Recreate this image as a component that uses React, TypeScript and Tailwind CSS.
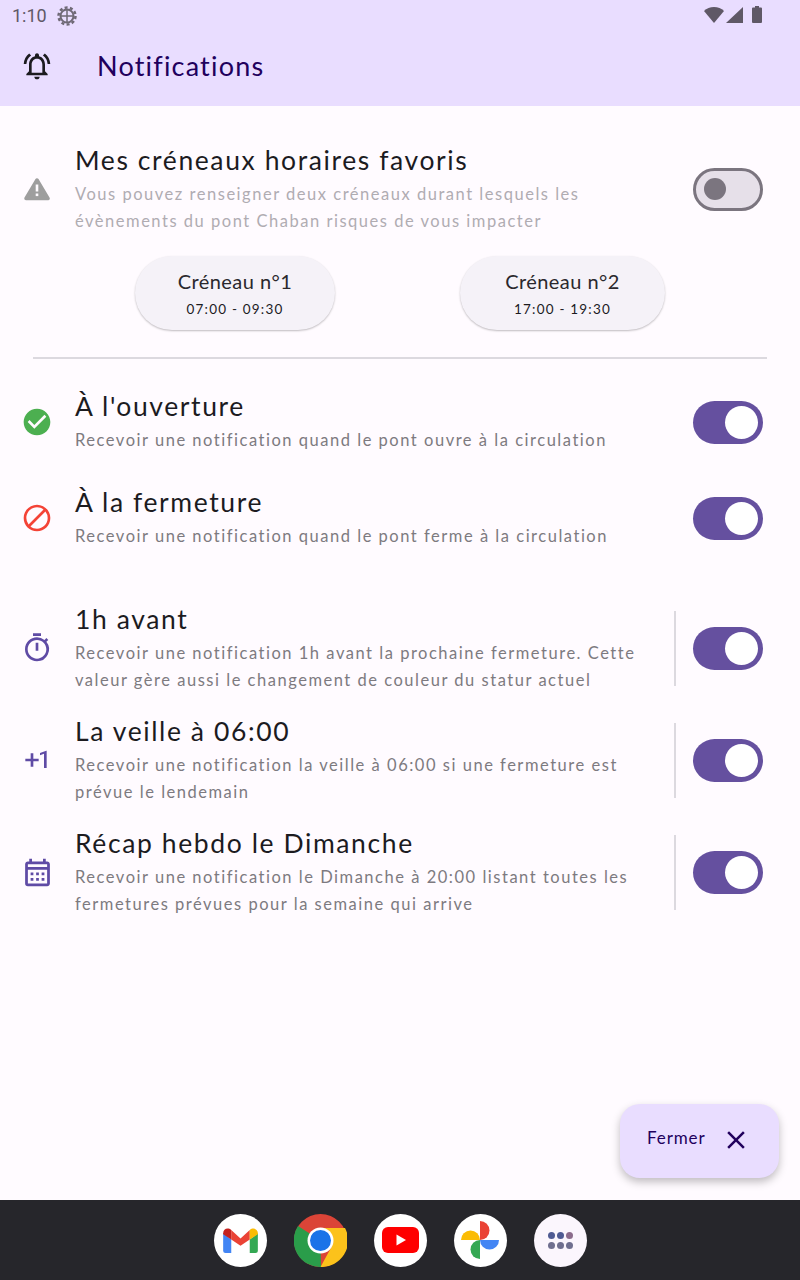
import React from 'react';
import {
  MdCheckCircle,
  MdBlock,
  MdOutlineTimer,
  MdExposurePlus1,
  MdOutlineCalendarMonth,
  MdClose,
  MdOutlineNotificationsActive,
} from 'react-icons/md';

const font = { fontFamily: 'Lato, "Open Sans", sans-serif' };

function Toggle({ on }: { on: boolean }) {
  if (on) {
    return (
      <div className="flex h-[43px] w-[70px] shrink-0 items-center justify-end rounded-full bg-[#65509f] pr-[5px]">
        <div className="h-[33px] w-[33px] rounded-full bg-white" />
      </div>
    );
  }
  return (
    <div className="flex h-[43px] w-[70px] shrink-0 items-center rounded-full border-[3px] border-[#7b757f] bg-[#e6e0e9] pl-[8px]">
      <div className="h-[22px] w-[22px] rounded-full bg-[#7b757f]" />
    </div>
  );
}

interface RowProps {
  icon: React.ReactNode;
  title: string;
  lines: string[];
  on: boolean;
  muted?: boolean;
  divider?: boolean;
  height: string;
}

function Row({ icon, title, lines, on, muted, divider, height }: RowProps) {
  return (
    <div className={`flex items-center pr-[37px] ${height}`}>
      <div className="flex w-[74px] shrink-0 justify-center">{icon}</div>
      <div className="ml-px min-w-0 flex-1">
        <div className="h-[32px] text-[26.5px] leading-[32px] tracking-[1.6px] whitespace-nowrap text-[#1c1b1f]">{title}</div>
        <div className={`mt-[5px] text-[16.5px] leading-[27px] tracking-[1.52px] ${muted ? 'text-[#b0acb2]' : 'text-[#7d7a80]'}`}>
          {lines.map((l) => (
            <div key={l} className="whitespace-nowrap">{l}</div>
          ))}
        </div>
      </div>
      {divider && <div className="mr-[17px] h-[75px] w-[2px] bg-[#dcd9df]" />}
      <Toggle on={on} />
    </div>
  );
}

function SlotButton({ label, time, width }: { label: string; time: string; width: string }) {
  return (
    <div className={`flex h-[74px] flex-col items-center rounded-[37px] bg-[#f5f2f8] pt-[13px] shadow-[0_1px_2px_rgba(0,0,0,0.25)] ${width}`}>
      <div className="text-[20px] leading-[25px] tracking-[0.45px] text-[#2a282d]">{label}</div>
      <div className="mt-[5px] text-[13.5px] leading-[20px] tracking-[1.2px] text-[#1c1b1f]">{time}</div>
    </div>
  );
}

function StatusIcons() {
  return (
    <svg width="60" height="20" viewBox="0 0 60 20" fill="#5f5866">
      <path d="M0 5 C5 -0.5 15 -0.5 20 5 L10 17 Z" />
      <path d="M22 17 L39 1 L39 17 Z" />
      <path d="M48 2.500 a1 1 0 0 1 1 -1 h2 v-1.500 h4 v1.500 h2 a1 1 0 0 1 1 1 v13.500 a1 1 0 0 1 -1 1 h-8 a1 1 0 0 1 -1 -1 Z" />
    </svg>
  );
}

function WarningIcon() {
  return (
    <svg width="26" height="24" viewBox="0 0 26 24">
      <path d="M13 3 L24 21.500 H2 Z" fill="#9e9e9e" stroke="#9e9e9e" strokeWidth="3.500" strokeLinejoin="round" />
      <rect x="11.700" y="7.500" width="2.600" height="7" fill="#fffbff" />
      <rect x="11.700" y="16.500" width="2.600" height="2.600" fill="#fffbff" />
    </svg>
  );
}

function Gmail() {
  return (
    <svg width="37" height="27" viewBox="0 0 32 26" preserveAspectRatio="none">
      <path d="M1 6 L1 23 a2 2 0 0 0 2 2 h5 V12 Z" fill="#4285f4" />
      <path d="M31 6 L31 23 a2 2 0 0 1 -2 2 h-5 V12 Z" fill="#34a853" />
      <path d="M8 3 L16 11 L24 3 L24 12 L16 18 L8 12 Z" fill="#ea4335" />
      <path d="M1 6 C1 2 5 0 8 3 V12 L1 7 Z" fill="#c5221f" />
      <path d="M31 6 C31 2 27 0 24 3 V12 L31 7 Z" fill="#fbbc04" />
    </svg>
  );
}

function Chrome() {
  return (
    <svg width="53" height="53" viewBox="0 0 53 53">
      <circle cx="26.500" cy="26.500" r="26.500" fill="#db4437" />
      <path d="M26.500 26.500 L4 12 A26.500 26.500 0 0 0 27 53 Z" fill="#2a9d4a" />
      <path d="M26.500 14 L51 14 A26.500 26.500 0 0 1 26.500 53 L38 32 Z" fill="#fcc21b" />
      <circle cx="26.500" cy="26.500" r="13" fill="#fff" />
      <circle cx="26.500" cy="26.500" r="10.500" fill="#1a73e8" />
    </svg>
  );
}

function Youtube() {
  return (
    <svg width="37" height="26" viewBox="0 0 37 26">
      <rect width="37" height="26" rx="6" fill="#ff0000" />
      <path d="M14.500 7.500 L24 13 L14.500 18.500 Z" fill="#fff" />
    </svg>
  );
}

function Photos() {
  return (
    <svg width="38" height="38" viewBox="0 0 38 38">
      <path d="M0 19 A9.500 9.500 0 0 1 19 19 Z" fill="#fbbc04" />
      <path d="M19 19 V0 A9.500 9.500 0 0 1 19 19 Z" fill="#ea4335" />
      <path d="M19 19 H38 A9.500 9.500 0 0 1 19 19 Z" fill="#4285f4" />
      <path d="M19 19 V38 A9.500 9.500 0 0 1 19 19 Z" fill="#34a853" />
    </svg>
  );
}

function AppsDots() {
  const colors = ['#4f5b93', '#4f5b93', '#8b6c8c', '#6f6f8f', '#6f6f8f', '#6f6f8f'];
  return (
    <div className="grid grid-cols-3 gap-x-[2px] gap-y-[3px]">
      {colors.map((c, i) => (
        <svg key={i} width="7" height="7" viewBox="0 0 7 7">
          <circle cx="3.500" cy="3.500" r="3.500" fill={c} />
        </svg>
      ))}
    </div>
  );
}

export default function App() {
  const purple = 'text-[#5f4ba5]';
  return (
    <div className="relative flex h-[1280px] w-[800px] flex-col overflow-hidden bg-[#fffbff]" style={font}>
      <header className="h-[106px] shrink-0 bg-[#e9ddff]">
        <div className="flex h-[32px] items-center justify-between pr-[36px] pl-[12px]">
          <div className="flex items-center gap-[10px]">
            <span className="text-[18px] leading-[32px] text-[#5f5866]" style={{ fontFamily: 'Roboto, sans-serif' }}>1:10</span>
            <svg width="20" height="20" viewBox="0 0 20 20" fill="none" stroke="#6f6976">
              <circle cx="10" cy="10" r="6.500" strokeWidth="2" />
              <circle cx="10" cy="10" r="8.500" strokeWidth="2.500" strokeDasharray="3 2.340" />
              <path d="M3.500 10 H16.500 M10 4 V16.500" strokeWidth="1.500" />
            </svg>
          </div>
          <StatusIcons />
        </div>
        <div className="flex h-[74px] items-center pb-[6px]">
          <div className="flex w-[74px] justify-center">
            <MdOutlineNotificationsActive className="text-[#1c1b1f]" size={32} />
          </div>
          <h1 className="ml-[23px] text-[27px] tracking-[1.2px] text-[#21005d]">Notifications</h1>
        </div>
      </header>

      <main className="relative flex-1">
        <div className="pt-[38px]">
          <Row
            height="h-[90px]"
            muted
            on={false}
            icon={<WarningIcon />}
            title="Mes créneaux horaires favoris"
            lines={[
              'Vous pouvez renseigner deux créneaux durant lesquels les',
              'évènements du pont Chaban risques de vous impacter',
            ]}
          />
        </div>
        <div className="mt-[22px] flex justify-center gap-[125px]">
          <SlotButton label="Créneau n°1" time="07:00 - 09:30" width="w-[200px]" />
          <SlotButton label="Créneau n°2" time="17:00 - 19:30" width="w-[205px]" />
        </div>
        <div className="mx-[33px] mt-[27px] h-[2px] bg-[#dcd9df]" />
        <div className="mt-[15px]">
          <Row
            height="h-[96px]"
            on
            icon={<MdCheckCircle className="text-[#4caf50]" size={32} />}
            title="À l'ouverture"
            lines={['Recevoir une notification quand le pont ouvre à la circulation']}
          />
          <Row
            height="h-[96px]"
            on
            icon={<MdBlock className="text-[#f44336]" size={32} />}
            title="À la fermeture"
            lines={['Recevoir une notification quand le pont ferme à la circulation']}
          />
        </div>
        <div className="mt-[26px]">
          <Row
            height="h-[112px]"
            on
            divider
            icon={<MdOutlineTimer className={purple} size={32} />}
            title="1h avant"
            lines={[
              'Recevoir une notification 1h avant la prochaine fermeture. Cette',
              'valeur gère aussi le changement de couleur du statur actuel',
            ]}
          />
          <Row
            height="h-[112px]"
            on
            divider
            icon={<MdExposurePlus1 className={`${purple} -translate-x-px`} size={32} />}
            title="La veille à 06:00"
            lines={[
              'Recevoir une notification la veille à 06:00 si une fermeture est',
              'prévue le lendemain',
            ]}
          />
          <Row
            height="h-[112px]"
            on
            divider
            icon={<MdOutlineCalendarMonth className={purple} size={33} />}
            title="Récap hebdo le Dimanche"
            lines={[
              'Recevoir une notification le Dimanche à 20:00 listant toutes les',
              'fermetures prévues pour la semaine qui arrive',
            ]}
          />
        </div>

        <button className="absolute right-[21px] bottom-[22px] flex h-[74px] w-[159px] items-center rounded-[20px] bg-[#e9ddff] pb-[2px] pl-[27px] shadow-[0_4px_8px_rgba(0,0,0,0.25)]">
          <span className="-translate-y-[2px] text-[17px] tracking-[0.9px] text-[#21005d]">Fermer</span>
          <MdClose className="ml-[15px] text-[#21005d]" size={30} />
        </button>
      </main>

      <nav className="flex h-[80px] shrink-0 items-center justify-center gap-[27px] bg-[#26262b]">
        <div className="flex h-[53px] w-[53px] items-center justify-center rounded-full bg-white"><Gmail /></div>
        <div className="flex h-[53px] w-[53px] items-center justify-center rounded-full"><Chrome /></div>
        <div className="flex h-[53px] w-[53px] items-center justify-center rounded-full bg-white"><Youtube /></div>
        <div className="flex h-[53px] w-[53px] items-center justify-center rounded-full bg-white"><Photos /></div>
        <div className="flex h-[53px] w-[53px] items-center justify-center rounded-full bg-[#fbf6fd]"><AppsDots /></div>
      </nav>
    </div>
  );
}
